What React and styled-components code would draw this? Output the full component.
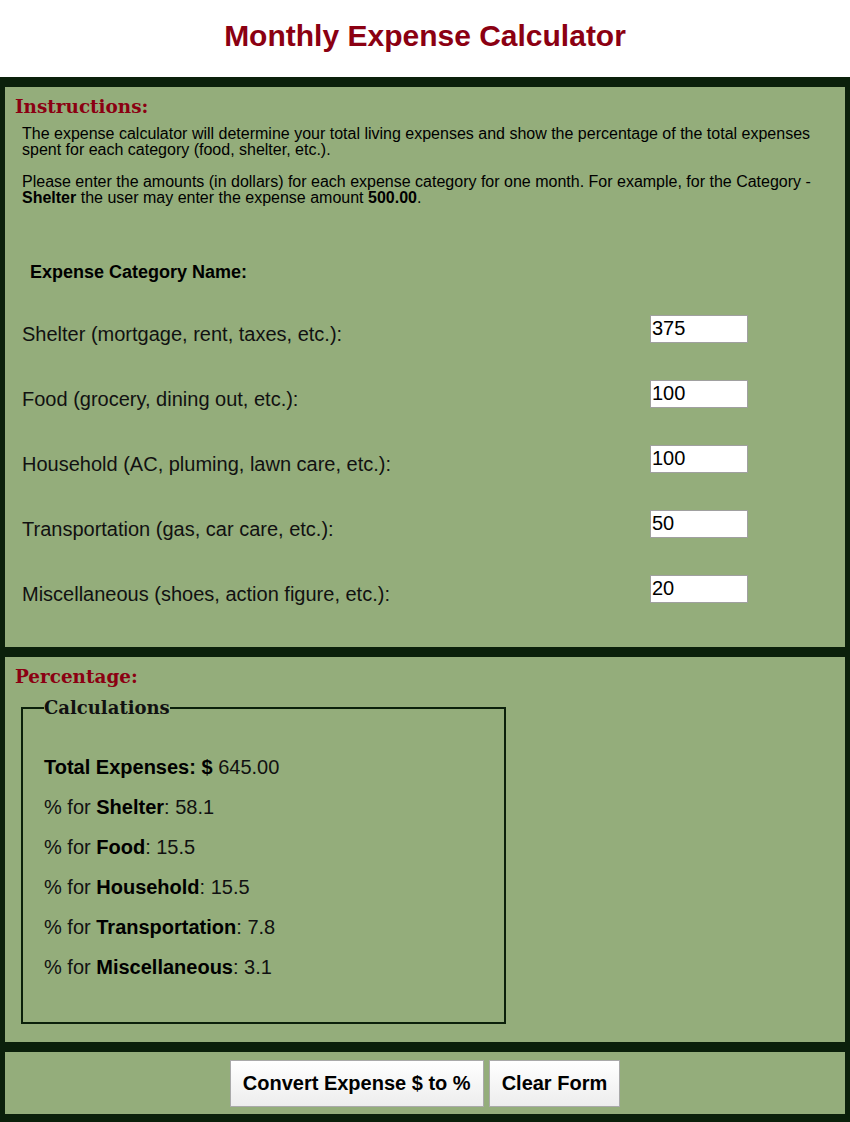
import React from "react";
import styled, { createGlobalStyle } from "styled-components";

const GlobalStyle = createGlobalStyle`
  body {
    margin: 0;
    background: #ffffff;
    font-family: "Liberation Sans", Arial, sans-serif;
  }
`;

const Header = styled.header`
  height: 77px;
  display: flex;
  align-items: center;
  justify-content: center;
`;

const Title = styled.h1`
  margin: 0;
  font-size: 30px;
  font-weight: bold;
  color: #8b0012;
  padding-bottom: 5px;
`;

const Frame = styled.main`
  background: #0b200b;
  padding: 10px 5px 8px;
  display: flex;
  flex-direction: column;
  gap: 10px;
`;

const Panel = styled.section`
  background: #94ad7b;
  padding: ${(p) => p.$pad || "0"};
`;

const SectionTitle = styled.h2`
  margin: 0;
  font-family: "DejaVu Serif", "Liberation Serif", serif;
  font-size: 18.4px;
  font-weight: bold;
  color: #8b0012;
  line-height: 22px;
`;

const Text = styled.p`
  margin: ${(p) => (p.$first ? "8px" : "0")} 0 16px;
  padding-left: 7px;
  font-size: 16px;
  line-height: 16px;
  color: #000;
`;

const ColumnHead = styled.div`
  padding: 35px 0 0 15px;
  height: 39px;
  font-size: 18px;
  font-weight: bold;
  line-height: 30px;
`;

const Row = styled.div`
  display: grid;
  grid-template-columns: 628px 98px;
  height: 65px;
  padding-left: 7px;
  align-items: center;
`;

const Label = styled.label`
  font-size: 20px;
  color: #111;
  padding-top: 11px;
`;

const Amount = styled.input`
  box-sizing: border-box;
  width: 98px;
  height: 28px;
  border: 1px solid #a0a0a0;
  padding: 0 1px;
  font-family: "Liberation Sans", Arial, sans-serif;
  font-size: 20px;
  background: #fff;
  color: #000;
  outline: none;
`;

const Fieldset = styled.fieldset`
  width: 485px;
  box-sizing: border-box;
  height: 327px;
  margin: 9px 0 0 6px;
  border: 2px solid #0b200b;
  padding: 29px 21px 0;
`;

const Legend = styled.legend`
  font-family: "DejaVu Serif", "Liberation Serif", serif;
  font-size: 18px;
  font-weight: bold;
  padding: 0;
  color: #111;
`;

const Result = styled.div`
  font-size: 20px;
  line-height: 40px;
  color: #111;
  b {
    color: #000;
  }
`;

const Actions = styled.div`
  display: flex;
  justify-content: center;
  gap: 5px;
`;

const Button = styled.button`
  height: 47px;
  padding: 0 12px;
  border: 1px solid #a9a9a9;
  background: linear-gradient(#ffffff, #ededed);
  font-family: "Liberation Sans", Arial, sans-serif;
  font-size: 20px;
  font-weight: bold;
  color: #000;
  cursor: pointer;
`;

const expenses = [
  ["Shelter (mortgage, rent, taxes, etc.):", "375"],
  ["Food (grocery, dining out, etc.):", "100"],
  ["Household (AC, pluming, lawn care, etc.):", "100"],
  ["Transportation (gas, car care, etc.):", "50"],
  ["Miscellaneous (shoes, action figure, etc.):", "20"],
];

const percents = [
  ["Shelter", "58.1"],
  ["Food", "15.5"],
  ["Household", "15.5"],
  ["Transportation", "7.8"],
  ["Miscellaneous", "3.1"],
];

export default function App() {
  return (
    <>
      <GlobalStyle />
      <Header>
        <Title>Monthly Expense Calculator</Title>
      </Header>
      <Frame>
        <Panel $pad="9px 10px 26px">
          <SectionTitle>Instructions:</SectionTitle>
          <Text $first>
            The expense calculator will determine your total living expenses and show the
            percentage of the total expenses spent for each category (food, shelter, etc.).
          </Text>
          <Text>
            Please enter the amounts (in dollars) for each expense category for one month. For
            example, for the Category - <b>Shelter</b> the user may enter the expense amount{" "}
            <b>500.00</b>.
          </Text>
          <ColumnHead>Expense Category Name:</ColumnHead>
          {expenses.map(([label, value]) => (
            <Row key={label}>
              <Label>{label}</Label>
              <Amount defaultValue={value} />
            </Row>
          ))}
        </Panel>
        <Panel $pad="9px 10px 18px">
          <SectionTitle>Percentage:</SectionTitle>
          <Fieldset>
            <Legend>Calculations</Legend>
            <Result>
              <b>Total Expenses: $</b> 645.00
            </Result>
            {percents.map(([name, pct]) => (
              <Result key={name}>
                % for <b>{name}</b>: {pct}
              </Result>
            ))}
          </Fieldset>
        </Panel>
        <Panel $pad="8px 10px 7px">
          <Actions>
            <Button>Convert Expense $ to %</Button>
            <Button>Clear Form</Button>
          </Actions>
        </Panel>
      </Frame>
    </>
  );
}
